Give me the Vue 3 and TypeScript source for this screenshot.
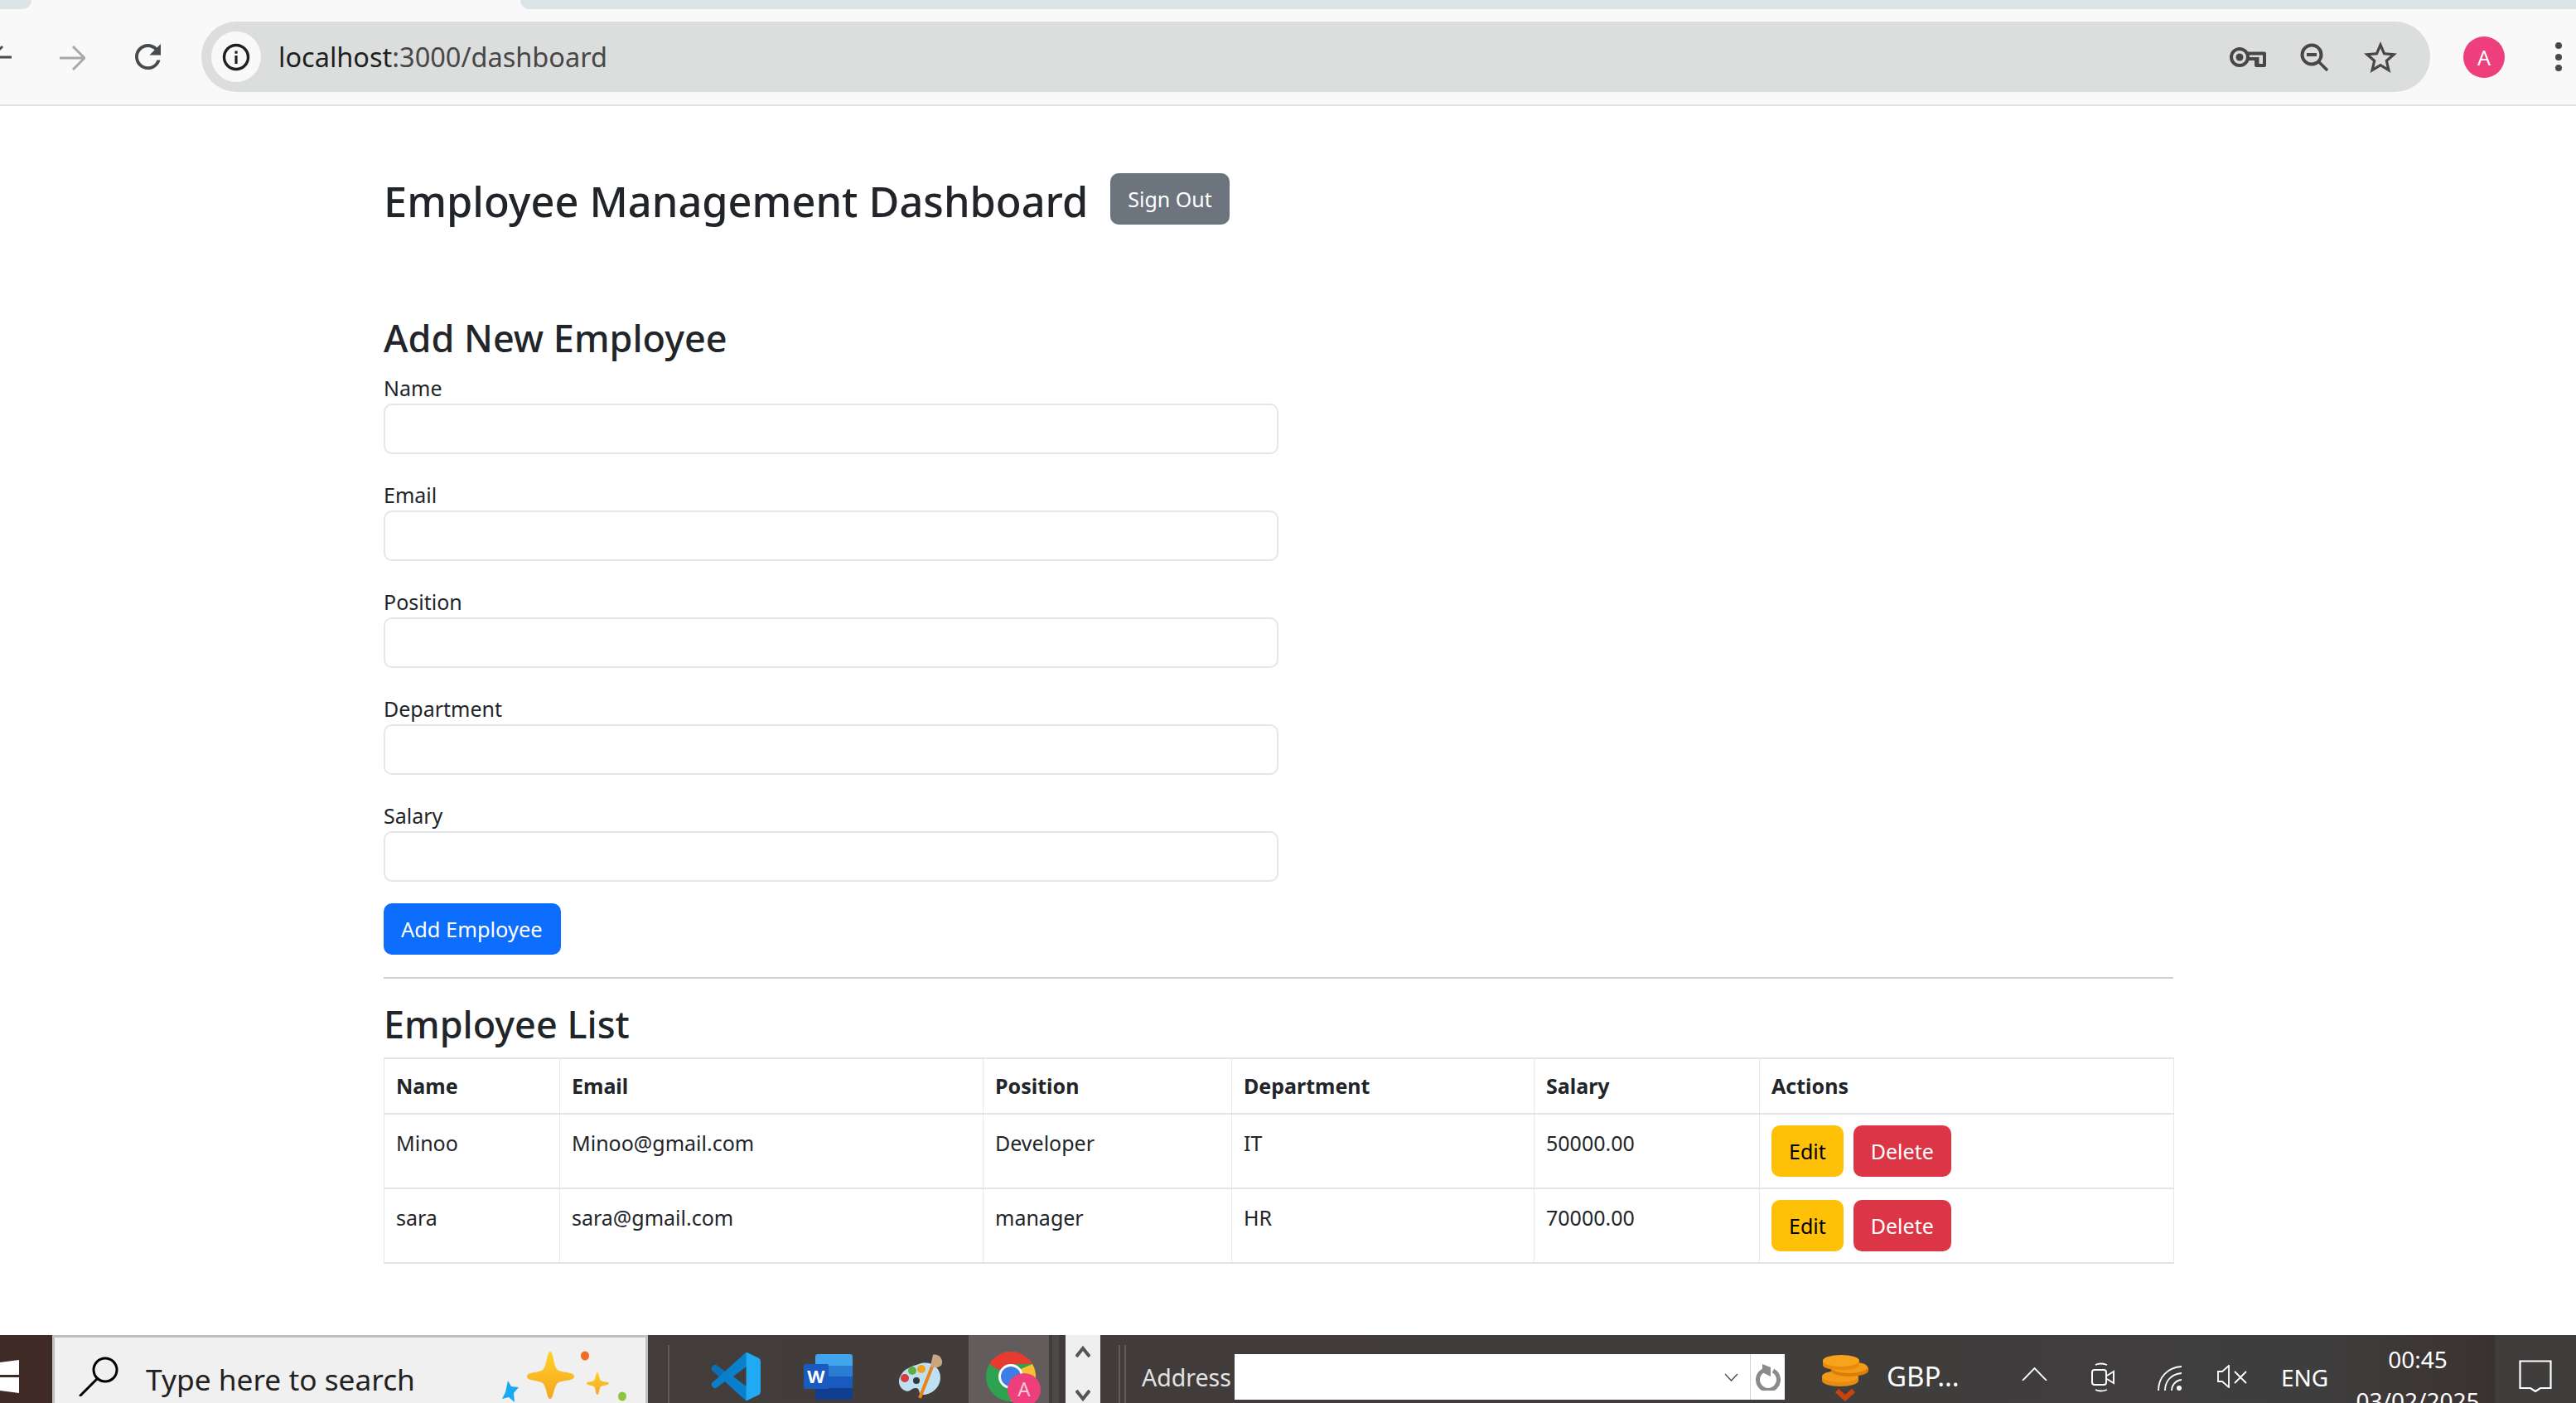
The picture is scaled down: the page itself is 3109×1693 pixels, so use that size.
<script setup lang="ts">
interface Employee {
  name: string
  email: string
  position: string
  department: string
  salary: string
}

const fields: string[] = ['Name', 'Email', 'Position', 'Department', 'Salary']
const columns: string[] = ['Name', 'Email', 'Position', 'Department', 'Salary', 'Actions']
const colWidths: number[] = [212, 511, 300, 365, 272, 500]

const employees: Employee[] = [
  { name: 'Minoo', email: 'Minoo@gmail.com', position: 'Developer', department: 'IT', salary: '50000.00' },
  { name: 'sara', email: 'sara@gmail.com', position: 'manager', department: 'HR', salary: '70000.00' }
]
</script>

<template>
  <div class="screen">
    <!-- browser chrome -->
    <div class="tab-strip">
      <div class="tab-left"></div>
      <div class="tab-gap"></div>
      <div class="tab-right"></div>
    </div>
    <div class="toolbar">
      <svg class="back" width="14" height="32" viewBox="0 0 14 32">
        <path d="M0 16H14M3 3l-13 13" fill="none" stroke="#454b4e" stroke-width="3" />
      </svg>
      <svg class="forward" width="31" height="30" viewBox="0 0 31 30">
        <path d="M0 15H29M16 1l14 14-14 14" fill="none" stroke="#a8a8a8" stroke-width="3" />
      </svg>
      <svg class="reload" width="31" height="31" viewBox="4 4 16 16">
        <path fill="#454b4e" d="M17.65 6.35A7.958 7.958 0 0 0 12 4c-4.42 0-7.99 3.58-7.99 8s3.57 8 7.99 8c3.73 0 6.84-2.55 7.73-6h-2.08A5.99 5.99 0 0 1 12 18c-3.31 0-6-2.69-6-6s2.69-6 6-6c1.66 0 3.14.69 4.22 1.78L13 11h7V4l-2.35 2.35z" />
      </svg>
      <div class="omnibox">
        <div class="site-info">
          <svg width="34" height="34" viewBox="0 0 34 34">
            <circle cx="17" cy="17" r="14.5" fill="none" stroke="#1f1f1f" stroke-width="3.4" />
            <rect x="15.4" y="15" width="3.2" height="10" fill="#1f1f1f" />
            <rect x="15.4" y="9.5" width="3.2" height="3.2" fill="#1f1f1f" />
          </svg>
        </div>
        <div class="url"><span class="host">localhost</span>:3000/dashboard</div>
        <div class="spacer"></div>
        <svg class="key" width="44" height="24" viewBox="0 0 44 24">
          <circle cx="12" cy="12" r="10" fill="none" stroke="#474747" stroke-width="4" />
          <circle cx="12" cy="12" r="4.5" fill="#474747" />
          <path d="M22 7.5H42V22H32V14H22" fill="none" stroke="#474747" stroke-width="4" stroke-linejoin="round" />
          <path d="M34 12v9" stroke="#474747" stroke-width="3" />
        </svg>
        <svg class="magnify" width="34" height="34" viewBox="0 0 34 34">
          <circle cx="14" cy="14" r="11.5" fill="none" stroke="#474747" stroke-width="4" />
          <path d="M8 14H20" stroke="#474747" stroke-width="4" />
          <path d="M22 22L33 33" stroke="#474747" stroke-width="3.5" />
        </svg>
        <svg class="star" width="40" height="38" viewBox="2 2 20 19">
          <path fill="#474747" d="M22 9.24l-7.19-.62L12 2 9.19 8.63 2 9.24l5.46 4.73L5.82 21 12 17.27 18.18 21l-1.63-7.03L22 9.24zM12 15.4l-3.76 2.27 1-4.28-3.32-2.88 4.38-.38L12 6.1l1.71 4.04 4.38.38-3.32 2.88 1 4.28L12 15.4z" />
        </svg>
      </div>
      <div class="avatar">A</div>
      <div class="kebab"><i></i><i></i><i></i></div>
    </div>

    <!-- page -->
    <main class="page">
      <div class="page-head">
        <h1>Employee Management Dashboard</h1>
        <button class="btn btn-secondary">Sign Out</button>
      </div>

      <h2>Add New Employee</h2>
      <form class="form" @submit.prevent>
        <div v-for="field in fields" :key="field" class="field">
          <label>{{ field }}</label>
          <input type="text" />
        </div>
        <button class="btn btn-primary">Add Employee</button>
      </form>

      <hr />

      <h2 class="list-title">Employee List</h2>
      <table>
        <colgroup>
          <col v-for="(w, i) in colWidths" :key="i" :style="{ width: w + 'px' }" />
        </colgroup>
        <thead>
          <tr>
            <th v-for="col in columns" :key="col">{{ col }}</th>
          </tr>
        </thead>
        <tbody>
          <tr v-for="emp in employees" :key="emp.email">
            <td>{{ emp.name }}</td>
            <td>{{ emp.email }}</td>
            <td>{{ emp.position }}</td>
            <td>{{ emp.department }}</td>
            <td>{{ emp.salary }}</td>
            <td class="actions-cell">
              <div class="actions">
                <button class="btn btn-warning">Edit</button>
                <button class="btn btn-danger">Delete</button>
              </div>
            </td>
          </tr>
        </tbody>
      </table>
    </main>

    <!-- windows taskbar -->
    <footer class="taskbar">
      <div class="start">
        <svg width="23" height="40" viewBox="0 0 23 40">
          <path fill="#fff" d="M0 3L23 0V18H0ZM0 21H23V40L0 37Z" />
        </svg>
      </div>
      <div class="search">
        <svg class="search-icon" width="48" height="48" viewBox="0 0 48 48">
          <circle cx="32" cy="16" r="14" fill="none" stroke="#000" stroke-width="3" />
          <path d="M22 27L2 47" stroke="#000" stroke-width="3" stroke-linecap="round" />
        </svg>
        <span class="search-text">Type here to search</span>
        <svg class="sparkles" width="146" height="62" viewBox="0 0 146 62">
          <defs>
            <linearGradient id="spark" x1="0" y1="0" x2="0" y2="1">
              <stop offset="0" stop-color="#ffd126" />
              <stop offset="1" stop-color="#f5a623" />
            </linearGradient>
          </defs>
          <path fill="url(#spark)" d="M58 0C62 0 62 18 67 22C72 26 87 24 87 30C87 36 72 34 67 38C62 43 62 57 58 57C54 57 54 43 49 38C44 34 30 36 30 30C30 24 44 26 49 22C54 18 54 0 58 0Z" />
          <path fill="url(#spark)" d="M115 25C117 25 117 32 119 35C122 37 129 36 129 38C129 41 122 40 119 42C117 45 117 52 115 52C113 52 113 45 111 42C108 40 102 41 102 38C102 36 108 37 111 35C113 32 113 25 115 25Z" />
          <path fill="#17a9f2" d="M7 35L11 42L20 43L14 50L15 61L8 55L0 57L4 49Z" />
          <ellipse cx="100" cy="5" rx="5" ry="5.5" fill="#f26b21" />
          <ellipse cx="145" cy="54" rx="5" ry="5.5" fill="#8cc63f" />
        </svg>
      </div>
      <div class="apps">
        <i class="sep"></i>
        <svg class="app vscode" width="60" height="60" viewBox="0 0 100 100">
          <path fill="#0a80cc" fill-rule="evenodd" d="M71 1L28 40L11 27Q8 25 5 28L2 31Q0 34 2 37L17 50L2 63Q0 66 2 69L5 72Q8 75 11 73L28 60L71 99L75 73L45 50L75 27Z" />
          <path fill="#1faaf3" d="M71 1L96 13Q100 15 100 20V80Q100 85 96 87L71 99Z" />
          <path fill="#0a6fb8" d="M28 40L11 27Q8 25 5 28L2 31Q0 34 2 37L17 50Z" />
        </svg>
        <svg class="app word" width="59" height="55" viewBox="0 0 59 55">
          <path fill="#41a5ee" d="M14 3Q14 0 17 0H56Q59 0 59 3V14H14Z" />
          <rect x="14" y="14" width="45" height="13" fill="#2b7cd3" />
          <rect x="14" y="27" width="45" height="14" fill="#185abd" />
          <path fill="#103f91" d="M14 41H59V52Q59 55 56 55H17Q14 55 14 52Z" />
          <rect x="0" y="12" width="30" height="30" rx="2" fill="#185abd" />
          <text x="15" y="35" text-anchor="middle" class="word-w">W</text>
        </svg>
        <svg class="app paint" width="54" height="54" viewBox="0 0 54 54">
          <path fill="#bfe0f2" d="M25 12C38 7 51 15 51 28C51 42 38 50 28 49C24 48 27 42 22 41C16 40 14 47 8 44C1 41 -1 32 3 26C7 18 15 15 25 12Z" />
          <circle cx="8" cy="29" r="5" fill="#d63c3c" />
          <circle cx="17" cy="20" r="5" fill="#5cb040" />
          <circle cx="28" cy="18" r="5" fill="#f3a31a" />
          <circle cx="22" cy="32" r="4" fill="#33383d" />
          <path d="M26 53L41 15" stroke="#e8841a" stroke-width="4" />
          <path fill="#c9a77e" d="M39 14L42 1C47 -1 54 4 53 11C52 16 45 18 39 14Z" />
        </svg>
        <div class="chrome-cell">
          <svg width="70" height="62" viewBox="0 0 70 62">
            <circle cx="30" cy="30" r="30" fill="#2fa24f" />
            <path fill="#e63b2e" d="M4 15A30 30 0 0 1 56 15H30A15 15 0 0 0 17 23Z" />
            <path fill="#fbc02d" d="M56 15A30 30 0 0 1 30 60L43 38A15 15 0 0 0 42 21Z" />
            <circle cx="30" cy="30" r="15" fill="#fff" />
            <circle cx="30" cy="30" r="12" fill="#3f7de6" />
            <circle cx="46" cy="46" r="20" fill="#ee3f7c" />
            <text x="46" y="54" text-anchor="middle" class="badge-a">A</text>
          </svg>
        </div>
        <i class="sep-dark"></i>
      </div>
      <div class="scroller">
        <svg width="18" height="14" viewBox="0 0 18 14"><path d="M1 13L9 3L17 13" fill="none" stroke="#555" stroke-width="4" /></svg>
        <svg width="18" height="14" viewBox="0 0 18 14"><path d="M1 1L9 11L17 1" fill="none" stroke="#555" stroke-width="4" /></svg>
      </div>
      <i class="sep sep-a"></i>
      <i class="sep sep-b"></i>
      <span class="address-label">Address</span>
      <div class="address-box">
        <div class="spacer"></div>
        <svg class="drop" width="17" height="10" viewBox="0 0 17 10"><path d="M1 1L8.500 9L16 1" fill="none" stroke="#444" stroke-width="1.200" /></svg>
        <div class="address-go">
          <svg width="30" height="32" viewBox="0 0 30 32">
            <path d="M9 8A12.500 12.500 0 1 0 21 8" fill="none" stroke="#8a8a8a" stroke-width="5" />
            <path d="M8 0L18 4V15L8 10Z" fill="#8a8a8a" />
          </svg>
        </div>
      </div>
      <svg class="coins" width="56" height="56" viewBox="0 0 56 56">
        <path fill="#e88a0f" d="M0 27H44V31C44 35 34 38 22 38C10 38 0 35 0 31Z" />
        <ellipse cx="22" cy="26" rx="22" ry="7" fill="#f39a16" />
        <path fill="#d97e0a" d="M11 15H56V19C56 23 46 26 33 26C21 26 11 23 11 19Z" />
        <ellipse cx="33" cy="15" rx="22" ry="7" fill="#f39a16" />
        <path fill="#e88a0f" d="M1 7H45V12C45 16 35 18 23 18C11 18 1 16 1 12Z" />
        <ellipse cx="23" cy="7" rx="22" ry="7" fill="#f7a31c" />
        <path d="M18 43L28 52L38 43" fill="none" stroke="#c8440f" stroke-width="6" />
      </svg>
      <span class="gbp">GBP...</span>
      <svg class="caret" width="31" height="16" viewBox="0 0 31 16"><path d="M1 16L15.500 1L30 16" fill="none" stroke="#fff" stroke-width="1.800" /></svg>
      <svg class="camera" width="28" height="36" viewBox="0 0 28 36">
        <path d="M5 3Q11 0 19 3M5 33Q11 36 19 33" fill="none" stroke="#fff" stroke-width="1.800" />
        <rect x="1" y="9" width="17" height="18" rx="3" fill="none" stroke="#fff" stroke-width="2" />
        <path d="M19 16L27 11V25L19 20" fill="none" stroke="#fff" stroke-width="2" />
      </svg>
      <svg class="wifi" width="29" height="30" viewBox="0 0 29 30">
        <path d="M1 30C1 14 12 2 29 1M9 30C9 19 16 10 29 9M17 30C17 24 21 18 29 17" fill="none" stroke="#fff" stroke-width="1.800" />
        <circle cx="26" cy="27" r="3" fill="#fff" />
      </svg>
      <svg class="speaker" width="36" height="28" viewBox="0 0 36 28">
        <path d="M1 8H6L14 1V27L6 20H1Z" fill="none" stroke="#fff" stroke-width="1.800" />
        <path d="M21 8L35 22M35 8L21 22" stroke="#fff" stroke-width="1.800" />
      </svg>
      <span class="eng">ENG</span>
      <div class="clock">
        <span>00:45</span>
        <span>03/02/2025</span>
      </div>
      <div class="notify">
        <svg width="40" height="39" viewBox="0 0 40 39">
          <path d="M1.500 1.500H38.500V34H26L20 38L14 34H1.500Z" fill="none" stroke="#fff" stroke-width="2.200" />
        </svg>
      </div>
    </footer>
  </div>
</template>

<style>
html,
body {
  margin: 0;
  background: #fff;
}
</style>

<style scoped>
.screen {
  width: 3109px;
  height: 1693px;
  overflow: hidden;
  display: flex;
  flex-direction: column;
  font-family: "Noto Sans", "Open Sans", sans-serif;
  color: #212529;
}

.spacer {
  flex: 1;
}

.tab-strip {
  height: 11px;
  display: flex;
  background: #f9f9f9;
}
.tab-left {
  width: 38px;
  background: #dde4e7;
  border-bottom-right-radius: 14px;
}
.tab-gap {
  width: 590px;
}
.tab-right {
  flex: 1;
  background: #dde4e7;
  border-bottom-left-radius: 14px;
}

.toolbar {
  height: 117px;
  box-sizing: border-box;
  padding-top: 15px;
  display: flex;
  align-items: flex-start;
  background: #f9f9f9;
  border-bottom: 2px solid #e3e3e3;
}
.back {
  margin-top: 27px;
}
.forward {
  margin: 29px 0 0 58px;
}
.reload {
  margin: 27px 0 0 60px;
}
.omnibox {
  margin-left: 49px;
  width: 2690px;
  height: 85px;
  flex: none;
  border-radius: 43px;
  background: #dcdedd;
  box-sizing: border-box;
  padding: 0 40px 0 12px;
  display: flex;
  align-items: center;
}
.site-info {
  width: 60px;
  height: 61px;
  border-radius: 50%;
  background: #f9f9f9;
  display: flex;
  align-items: center;
  justify-content: center;
}
.url {
  margin-left: 21px;
  font-size: 32.500px;
  color: #474747;
  white-space: nowrap;
}
.host {
  color: #1f1f1f;
}
.magnify {
  margin-left: 41px;
}
.star {
  margin-left: 43px;
}
.avatar {
  margin: 18px 0 0 40px;
  width: 50px;
  height: 50px;
  flex: none;
  border-radius: 50%;
  background: #ee3f7c;
  color: #fff;
  font-size: 25px;
  display: flex;
  align-items: center;
  justify-content: center;
}
.kebab {
  margin: 25px 0 0 61px;
  display: flex;
  flex-direction: column;
  gap: 5.500px;
}
.kebab i {
  width: 8px;
  height: 8px;
  border-radius: 50%;
  background: #444a4d;
}

.page {
  flex: 1;
  min-height: 0;
  background: #fff;
  padding: 81px 0 0 463px;
  width: 2160px;
}
.page-head {
  display: flex;
  align-items: flex-start;
  gap: 27px;
  height: 65px;
  margin-bottom: 109px;
}
h1 {
  margin: 3px 0 0;
  font-size: 50.500px;
  font-weight: 500;
  line-height: 62px;
  white-space: nowrap;
}
h2 {
  margin: 0 0 16px;
  font-size: 45px;
  font-weight: 500;
  line-height: 50px;
}
.field {
  margin-bottom: 30px;
}
label {
  display: block;
  height: 38px;
  font-size: 25px;
  line-height: 38px;
}
input {
  display: block;
  width: 1080px;
  height: 61px;
  box-sizing: border-box;
  border: 2px solid #e4e6e9;
  border-radius: 10px;
  background: #fff;
}
.form .field:last-of-type {
  margin-bottom: 26px;
}

.btn {
  height: 62px;
  box-sizing: border-box;
  padding: 0 21px;
  border: none;
  border-radius: 10px;
  font-family: inherit;
  font-size: 25px;
  color: #fff;
  white-space: nowrap;
}
.btn-secondary {
  background: #6c757d;
}
.btn-primary {
  background: #0d6efd;
  display: block;
  padding: 0 22px 0 21px;
  font-size: 25.400px;
}
.btn-warning {
  background: #ffc107;
  color: #000;
}
.btn-danger {
  background: #dc3545;
}

hr {
  margin: 27px 0 0;
  border: none;
  height: 2px;
  background: #d0d0d0;
}
.list-title {
  margin: 30px 0 15px;
}

table {
  table-layout: fixed;
  border-collapse: collapse;
  width: 2160px;
  font-size: 25px;
  line-height: 38px;
}
th,
td {
  box-sizing: border-box;
  border-top: 2px solid #e2e4e8;
  border-bottom: 2px solid #e2e4e8;
  border-left: 1px solid #e6e8eb;
  border-right: 1px solid #e6e8eb;
  padding: 13px 13px 13px 14px;
  text-align: left;
  vertical-align: top;
  color: #212529;
}
th {
  height: 67px;
  font-weight: 700;
}
td {
  height: 90px;
  padding-top: 15px;
}
td.actions-cell {
  padding-top: 13px;
}
.actions {
  display: flex;
  gap: 12px;
}

.taskbar {
  height: 82px;
  flex: none;
  display: flex;
  align-items: flex-start;
  overflow: hidden;
  background: linear-gradient(90deg, #443d3b 0%, #413c3b 50%, #3f3e3e 90%, #3a3230 96.800%, #403e3d 96.900%);
  color: #fff;
}
.start {
  width: 63px;
  height: 82px;
  background: #3f2a26;
  padding-top: 30px;
  box-sizing: border-box;
}
.start svg {
  display: block;
}
.search {
  width: 719px;
  height: 82px;
  box-sizing: border-box;
  background: #f0f0f0;
  border: 3px solid #c0c0c0;
  border-bottom: none;
  display: flex;
  align-items: flex-start;
  color: #222;
}
.search-icon {
  margin: 23px 0 0 29px;
}
.search-text {
  margin: 25px 0 0 33px;
  font-size: 35.300px;
  line-height: 50px;
  white-space: nowrap;
}
.sparkles {
  margin: 17px 0 0 auto;
  margin-right: 27px;
  overflow: visible;
}
.apps {
  width: 504px;
  height: 82px;
  display: flex;
  align-items: flex-start;
}
.sep {
  display: block;
  margin-top: 12px;
  width: 2px;
  height: 70px;
  background: #605b5a;
  flex: none;
}
.apps > .sep {
  margin-left: 24px;
}
.vscode {
  margin: 20px 0 0 50px;
}
.word {
  margin: 23px 0 0 52px;
}
.paint {
  margin: 23px 0 0 55px;
}
.chrome-cell {
  margin-left: 31px;
  width: 97px;
  height: 82px;
  background: #625d5c;
  box-sizing: border-box;
  padding: 20px 0 0 21px;
}
.word-w {
  font-family: "Noto Sans", sans-serif;
  font-weight: 700;
  font-size: 22px;
  fill: #fff;
}
.badge-a {
  font-family: "Noto Sans", sans-serif;
  font-size: 24px;
  fill: #f8c6d8;
}
.sep-dark {
  display: block;
  margin-left: 4px;
  width: 8px;
  height: 82px;
  background: #4c4948;
}
.scroller {
  width: 42px;
  height: 82px;
  flex: none;
  box-sizing: border-box;
  background: #efefef;
  padding: 13px 0 2px;
  display: flex;
  flex-direction: column;
  align-items: center;
  justify-content: space-between;
}
.sep-a {
  margin-left: 22px;
}
.sep-b {
  margin-left: 5px;
}
.address-label {
  margin: 29px 0 0 19px;
  width: 112px;
  flex: none;
  font-size: 28.500px;
  line-height: 44px;
  color: #e2e2e2;
}
.address-box {
  width: 664px;
  height: 55px;
  margin-top: 23px;
  flex: none;
  background: #fff;
  display: flex;
  align-items: center;
}
.drop {
  margin-right: 14px;
}
.address-go {
  width: 42px;
  height: 55px;
  border-left: 1px solid #d0d0d0;
  box-sizing: border-box;
  display: flex;
  align-items: center;
  justify-content: center;
}
.coins {
  margin: 24px 0 0 45px;
  flex: none;
}
.gbp {
  margin: 25px 0 0 22px;
  width: 87px;
  flex: none;
  font-size: 33px;
  line-height: 50px;
  white-space: nowrap;
}
.caret {
  margin: 39px 0 0 76px;
  flex: none;
}
.camera {
  margin: 33px 0 0 53px;
  flex: none;
}
.wifi {
  margin: 37px 0 0 52px;
  flex: none;
}
.speaker {
  margin: 36px 0 0 43px;
  flex: none;
}
.eng {
  margin: 29px 0 0 41px;
  width: 56px;
  flex: none;
  font-size: 28px;
  line-height: 44px;
}
.clock {
  margin: 8px 0 0 34px;
  width: 150px;
  flex: none;
  display: flex;
  flex-direction: column;
  align-items: center;
  gap: 8px;
  font-size: 28px;
  line-height: 42px;
  white-space: nowrap;
}
.notify {
  margin-left: 18px;
  padding: 30px 0 0 29px;
  flex: none;
}
.notify svg {
  display: block;
}
</style>
